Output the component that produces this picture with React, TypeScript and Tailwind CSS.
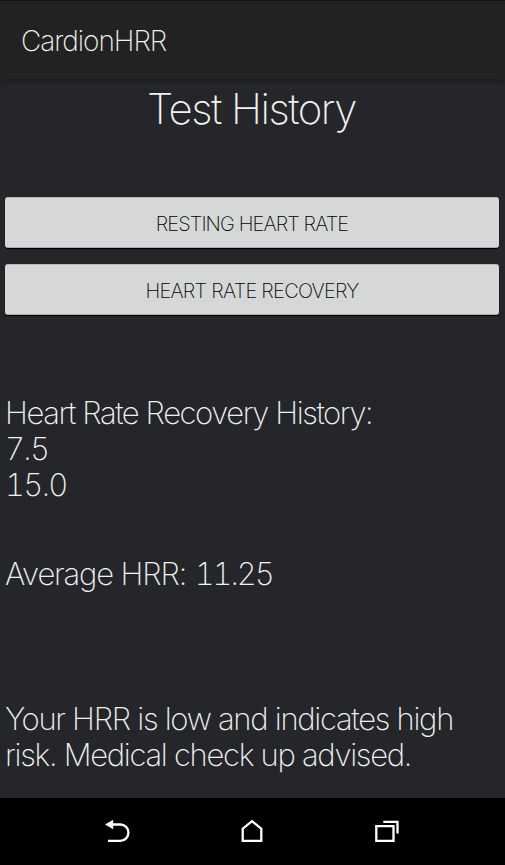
import type { ReactNode } from 'react';

const HISTORY = ['7.5', '15.0'];

function HistoryButton({ children }: { children: ReactNode }) {
  return (
    <button className="flex h-[51px] w-full items-center justify-center rounded-[3px] border-y border-t-[#b9bbbb] border-b-[#a9abab] bg-[#d6d8d7] pt-[2px] text-xl font-[150] whitespace-nowrap text-black shadow-[0_1px_1px_#000]">
      {children}
    </button>
  );
}

function NavBar() {
  return (
    <nav className="relative h-[67px] shrink-0 bg-black text-white">
      <svg viewBox="0 0 505 67" className="h-full w-full" fill="none" stroke="currentColor" strokeWidth="2.3">
        {/* Back */}
        <path d="M111 26.5h9.5a7.8 8 0 0 1 0 16.3H108" />
        <path d="M105 26.5l8.2-4.8v9.6z" fill="currentColor" stroke="none" />
        {/* Home */}
        <path d="M242.7 42.9V30.7l9.3-7.5 9.3 7.5v12.2z" />
        {/* Recents */}
        <path d="M376.3 28.2h17.2v14.6h-17.2z" />
        <path d="M383.3 23.8h14.2v11.7" />
      </svg>
    </nav>
  );
}

export default function App() {
  return (
    <div className="flex h-[865px] w-[505px] flex-col overflow-hidden bg-[#25262a] font-['Inter',sans-serif] font-extralight text-[#f0f2f0]">
      <header className="z-10 flex h-[79px] shrink-0 items-center border-t border-[#111] bg-[#222] pt-[2px] pl-[21px] shadow-[0_2px_5px_rgba(0,0,0,0.35)]">
        <span className="text-[28px] leading-8 tracking-[-1.05px]">CardionHRR</span>
      </header>

      <main className="flex h-[719px] shrink-0 flex-col">
        <h1 className="mt-1 h-[52px] pr-[2px] text-center text-[42px] leading-[52px] tracking-[-1.5px]">Test History</h1>

        <div className="mt-[62px] flex flex-col gap-4 pr-[6px] pl-[5px]">
          <HistoryButton>
            <span className="tracking-[-0.9px]">RESTING HEART RATE</span>
          </HistoryButton>
          <HistoryButton>
            <span className="tracking-[-0.75px]">HEART RATE RECOVERY</span>
          </HistoryButton>
        </div>

        <div className="mt-20 pl-[5px] text-[31px] leading-9 whitespace-nowrap">
          <section>
            <p className="tracking-[-1.43px]">Heart Rate Recovery History:</p>
            {HISTORY.map((value) => (
              <p key={value} className="tracking-[-1.7px] tabular-nums">{value}</p>
            ))}
          </section>
          <p className="mt-[53px] tracking-[-1.15px]">
            Average HRR: <span className="ml-px tracking-[-2.1px] tabular-nums">11.25</span>
          </p>
          <p className="mt-[109px] tracking-[-1.29px]">
            Your HRR is low and indicates high
            <br />
            risk. Medical check up advised.
          </p>
        </div>
      </main>

      <NavBar />
    </div>
  );
}
